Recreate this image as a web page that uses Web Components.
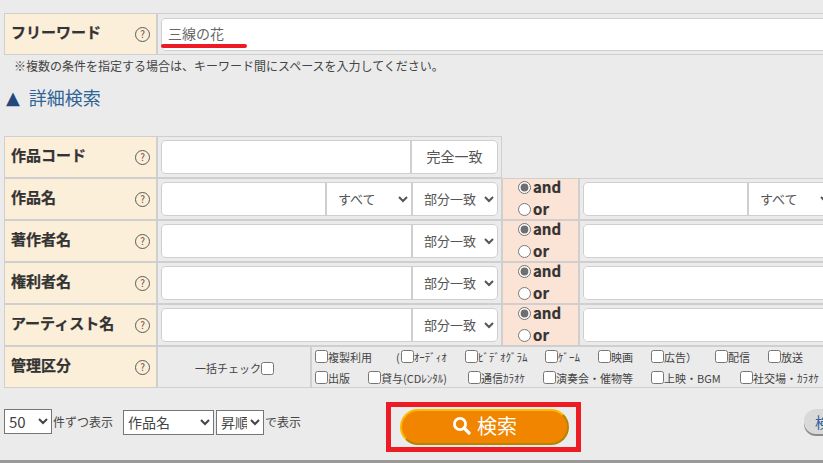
<!DOCTYPE html>
<html lang="ja">
<head>
<meta charset="utf-8">
<title>検索</title>
<style>
  html, body { margin: 0; height: 100%; overflow: hidden; background: #ebebeb; }
  body { font-family: "Noto Sans CJK JP", "Noto Sans", sans-serif; color: #444; }
</style>
</head>
<body>
<search-page>
  <field-row style="width:1100px">
    <span slot="label">フリーワード</span>
    <form-cell grow>
      <input-group style="height:33px;margin-top:1px">
        <text-box grow value="三線の花"></text-box>
      </input-group>
      <red-underline></red-underline>
    </form-cell>
  </field-row>
  <p-note>※複数の条件を指定する場合は、キーワード間にスペースを入力してください。</p-note>
  <detail-heading>詳細検索</detail-heading>

  <field-row>
    <span slot="label">作品コード</span>
    <form-cell>
      <input-group>
        <text-box width="248"></text-box>
        <static-tag>完全一致</static-tag>
      </input-group>
    </form-cell>
  </field-row>

  <field-row style="width:1100px">
    <span slot="label">作品名</span>
    <form-cell>
      <input-group>
        <text-box width="163"></text-box>
        <pick-list width="84" options="すべて"></pick-list>
        <pick-list width="84" options="部分一致"></pick-list>
      </input-group>
    </form-cell>
    <and-or></and-or>
    <form-cell grow>
      <input-group>
        <text-box width="163"></text-box>
        <pick-list width="84" options="すべて"></pick-list>
        <pick-list width="84" options="部分一致"></pick-list>
      </input-group>
    </form-cell>
  </field-row>

  <field-row style="width:1100px">
    <span slot="label">著作者名</span>
    <form-cell>
      <input-group>
        <text-box width="249"></text-box>
        <pick-list width="84" options="部分一致"></pick-list>
      </input-group>
    </form-cell>
    <and-or></and-or>
    <form-cell grow>
      <input-group><text-box grow></text-box></input-group>
    </form-cell>
  </field-row>

  <field-row style="width:1100px">
    <span slot="label">権利者名</span>
    <form-cell>
      <input-group>
        <text-box width="249"></text-box>
        <pick-list width="84" options="部分一致"></pick-list>
      </input-group>
    </form-cell>
    <and-or></and-or>
    <form-cell grow>
      <input-group><text-box grow></text-box></input-group>
    </form-cell>
  </field-row>

  <field-row style="width:1100px">
    <span slot="label">アーティスト名</span>
    <form-cell>
      <input-group>
        <text-box width="249"></text-box>
        <pick-list width="84" options="部分一致"></pick-list>
      </input-group>
    </form-cell>
    <and-or></and-or>
    <form-cell grow>
      <input-group><text-box grow></text-box></input-group>
    </form-cell>
  </field-row>

  <field-row style="width:1100px">
    <span slot="label">管理区分</span>
    <bulk-check>一括チェック</bulk-check>
    <check-grid>
      <check-line>
        <check-item width="81">複製利用</check-item>
        <check-item width="69" paren>ｵｰﾃﾞｨｵ</check-item>
        <check-item width="80">ﾋﾞﾃﾞｵｸﾞﾗﾑ</check-item>
        <check-item width="53">ｹﾞｰﾑ</check-item>
        <check-item width="53">映画</check-item>
        <check-item width="64">広告）</check-item>
        <check-item width="53">配信</check-item>
        <check-item width="53">放送</check-item>
      </check-line>
      <check-line>
        <check-item width="53">出版</check-item>
        <check-item width="100">貸与(CDﾚﾝﾀﾙ)</check-item>
        <check-item width="75">通信ｶﾗｵｹ</check-item>
        <check-item width="108">演奏会・催物等</check-item>
        <check-item width="89">上映・BGM</check-item>
        <check-item width="90">社交場・ｶﾗｵｹ</check-item>
      </check-line>
    </check-grid>
  </field-row>

  <result-bar>
    <plain-select width="48" options="50" style="--fs:15px"></plain-select><bar-text>件ずつ表示</bar-text>
    <plain-select width="91" options="作品名" style="margin-left:10px"></plain-select>
    <plain-select width="48" options="昇順" style="margin-left:2px"></plain-select><bar-text>で表示</bar-text>
    <search-button slot="action">検索</search-button>
    <side-button slot="side">検</side-button>
  </result-bar>
</search-page>

<script>
// small helper, every element is just a style + markup in an open shadow root
const define = ( name, html, setup ) => {
  const tpl = document.createElement( "template" );
  tpl.innerHTML = html;
  customElements.define( name, class extends HTMLElement {
    constructor() {
      super();
      this.attachShadow( {mode:"open"} );
      this.shadowRoot.appendChild( tpl.content.cloneNode(true) );
    }
    connectedCallback() {
      if( setup ) setup( this, this.shadowRoot );
    }
  });
};

const fillOptions = ( host, root ) => {
  const sel = root.querySelector( "select" );
  sel.innerHTML = "";
  host.getAttribute( "options" ).split( "," ).forEach( t => sel.add( new Option( t ) ) );
  host.style.width = host.getAttribute( "width" ) + "px";
};

define( "search-page", `
  <style>
    :host { display: block; width: 1100px; padding: 13px 0 0 4px; box-sizing: border-box; }
  </style>
  <slot></slot>
`);

define( "field-row", `
  <style>
    :host {
      display: flex; gap: 2px; width: fit-content; height: 42px; box-sizing: border-box;
      padding: 1px; background: #cfcfcf;
    }
    .label {
      display: flex; align-items: center; justify-content: space-between; flex: none;
      width: 151px; box-sizing: border-box; padding: 0 6px; background: #fcefd9;
      font-size: 15px; font-weight: 700; color: #333; -webkit-text-stroke: 0.25px #333;
    }
    .label span { margin-top: -6px; white-space: nowrap; }
    .help {
      width: 13px; height: 13px; border: 1.2px solid #5a5a5a; border-radius: 50%;
      display: flex; align-items: center; justify-content: center; -webkit-text-stroke: 0;
      font-size: 10px; font-weight: 400; color: #6b4a3a; line-height: 1;
    }
  </style>
  <div class="label"><span><slot name="label"></slot></span><div class="help">?</div></div>
  <slot></slot>
`);

define( "form-cell", `
  <style>
    :host {
      display: block; position: relative; flex: none; width: 343px; box-sizing: border-box;
      padding: 3px; background: #ebebeb;
    }
    :host([grow]) { flex: 1; width: auto; }
  </style>
  <slot></slot>
`);

define( "input-group", `
  <style>
    :host {
      display: flex; height: 34px; box-sizing: border-box; background: #cfcfcf;
      border: 1px solid #cfcfcf; border-radius: 5px; overflow: hidden; gap: 2px;
    }
  </style>
  <slot></slot>
`);

define( "text-box", `
  <style>
    :host { display: block; flex: none; }
    :host([grow]) { flex: 1; }
    input {
      width: 100%; height: 100%; box-sizing: border-box; border: 0; outline: 0; padding: 0 6px 3px;
      background: #fff; font: 14px "Noto Sans CJK JP", sans-serif; color: #666;
    }
  </style>
  <input type="text">
`, ( host, root ) => {
  if( host.hasAttribute( "width" ) ) host.style.width = host.getAttribute( "width" ) + "px";
  root.querySelector( "input" ).value = host.getAttribute( "value" ) || "";
});

define( "static-tag", `
  <style>
    :host {
      flex: 1; display: flex; align-items: center; justify-content: center; background: #fff;
      padding-bottom: 3px; font-size: 14px; color: #555;
    }
  </style>
  <slot></slot>
`);

define( "pick-list", `
  <style>
    :host { display: block; flex: none; }
    select {
      width: 100%; height: 100%; border: 0; outline: 0; border-radius: 0; padding: 0 0 2px 7px;
      background: #fff; font: 13px "Noto Sans CJK JP", sans-serif; color: #555;
    }
  </style>
  <select></select>
`, fillOptions );

define( "plain-select", `
  <style>
    :host { display: block; flex: none; height: 25px; }
    select {
      width: 100%; height: 100%; box-sizing: border-box; padding: 0;
      font: var(--fs, 14px) "Noto Sans CJK JP", sans-serif; color: #444; background: #fff;
    }
  </style>
  <select></select>
`, fillOptions );

define( "and-or", `
  <style>
    :host {
      display: flex; flex-direction: column; justify-content: center; flex: none; width: 75px;
      box-sizing: border-box; padding: 0 0 2px 15px; background: #fbe3d5;
      font-size: 15px; font-weight: 700; color: #333; line-height: 22px; -webkit-text-stroke: 0.2px #333;
    }
    label { display: flex; align-items: center; gap: 2px; }
    input { margin: 0; width: 13px; height: 13px; accent-color: #6f6f6f; }
  </style>
  <label><input type="radio" name="m" checked>and</label>
  <label><input type="radio" name="m">or</label>
`);

define( "red-underline", `
  <style>
    :host {
      position: absolute; left: 3px; top: 30px; width: 86px; height: 4px;
      background: #ed1c24; border-radius: 2px;
    }
  </style>
`);

define( "p-note", `
  <style>
    :host { display: block; padding: 0 0 0 10px; height: 22px; font-size: 12px; line-height: 22px; color: #444; }
  </style>
  <slot></slot>
`);

define( "detail-heading", `
  <style>
    :host {
      display: flex; align-items: center; gap: 9px; height: 24px; margin: 8px 0 27px 2px;
      font-size: 18px; color: #2f6496;
    }
    i { font-style: normal; font-size: 18px; color: #24477c; font-family: "DejaVu Sans", sans-serif; }
  </style>
  <i>▲</i><slot></slot>
`);

define( "bulk-check", `
  <style>
    :host {
      display: flex; align-items: center; justify-content: flex-end; flex: none; width: 152px;
      box-sizing: border-box; padding: 2px 36px 0 0; background: #ebebeb; font-size: 11px; color: #444;
    }
    input { margin: 0; width: 13px; height: 13px; }
  </style>
  <slot></slot><input type="checkbox">
`);

define( "check-grid", `
  <style>
    :host {
      display: flex; flex-direction: column; flex: 1; box-sizing: border-box; padding: 0 0 0 3px;
      background: #ebebeb; justify-content: center; gap: 2px;
    }
  </style>
  <slot></slot>
`);

define( "check-line", `
  <style>
    :host { display: flex; height: 19px; align-items: center; }
  </style>
  <slot></slot>
`);

define( "check-item", `
  <style>
    :host {
      display: flex; align-items: center; flex: none; font-size: 11px; color: #444; white-space: nowrap;
    }
    input { margin: 0; width: 13px; height: 13px; flex: none; }
    b { font-weight: 400; margin-right: 1px; }
  </style>
  <b hidden>(</b><input type="checkbox"><slot></slot>
`, ( host, root ) => {
  host.style.width = host.getAttribute( "width" ) + "px";
  if( host.hasAttribute( "paren" ) ) root.querySelector( "b" ).hidden = false;
});

define( "result-bar", `
  <style>
    :host { display: block; margin: 14px 0 0 -4px; padding-left: 4px; border-bottom: 3px solid #999; box-sizing: border-box; height: 61px; width: 830px; }
    .row { display: flex; align-items: flex-start; }
    .left { display: flex; align-items: center; width: 382px; margin-top: 7px; flex: none; }
    .side { margin-left: 223px; margin-top: 7px; }
  </style>
  <div class="row">
    <div class="left"><slot></slot></div>
    <slot name="action"></slot>
    <div class="side"><slot name="side"></slot></div>
  </div>
`);

define( "bar-text", `
  <style>
    :host { display: block; margin-left: 1px; font-size: 12px; color: #444; white-space: nowrap; }
  </style>
  <slot></slot>
`);

define( "search-button", `
  <style>
    :host {
      display: flex; align-items: center; justify-content: center; width: 195px; height: 50px;
      box-sizing: border-box; border: 5px solid #ed1c24; padding-left: 2px; flex: none;
    }
    .btn {
      display: flex; align-items: center; justify-content: center; gap: 6px; width: 169px; height: 36px;
      box-sizing: border-box; border-radius: 18px; background: #f28500; color: #fff; font-size: 20px;
      padding-bottom: 3px;
      border-top: 2px solid #fdb900; border-left: 2px solid #fdb900;
      border-bottom: 2px solid #b38600; border-right: 2px solid #b38600;
    }
    svg { width: 19px; height: 19px; }
  </style>
  <div class="btn">
    <svg viewBox="0 0 19 19" fill="none" stroke="#fff">
      <circle cx="8" cy="8" r="5.6" stroke-width="2.8"/>
      <path d="M12.2 12.2 L17 17" stroke-width="3.2" stroke-linecap="round"/>
    </svg>
    <slot></slot>
  </div>
`);

define( "side-button", `
  <style>
    :host {
      display: block; width: 90px; height: 25px; box-sizing: border-box; border-radius: 12px;
      padding: 1px 0 0 11px; background: #d9d9d9; box-shadow: 0 2px 0 #8a8a8a;
      font-size: 15px; line-height: 23px; color: #2c5f9b; white-space: nowrap;
    }
  </style>
  <slot></slot>
`);
</script>
</body>
</html>
